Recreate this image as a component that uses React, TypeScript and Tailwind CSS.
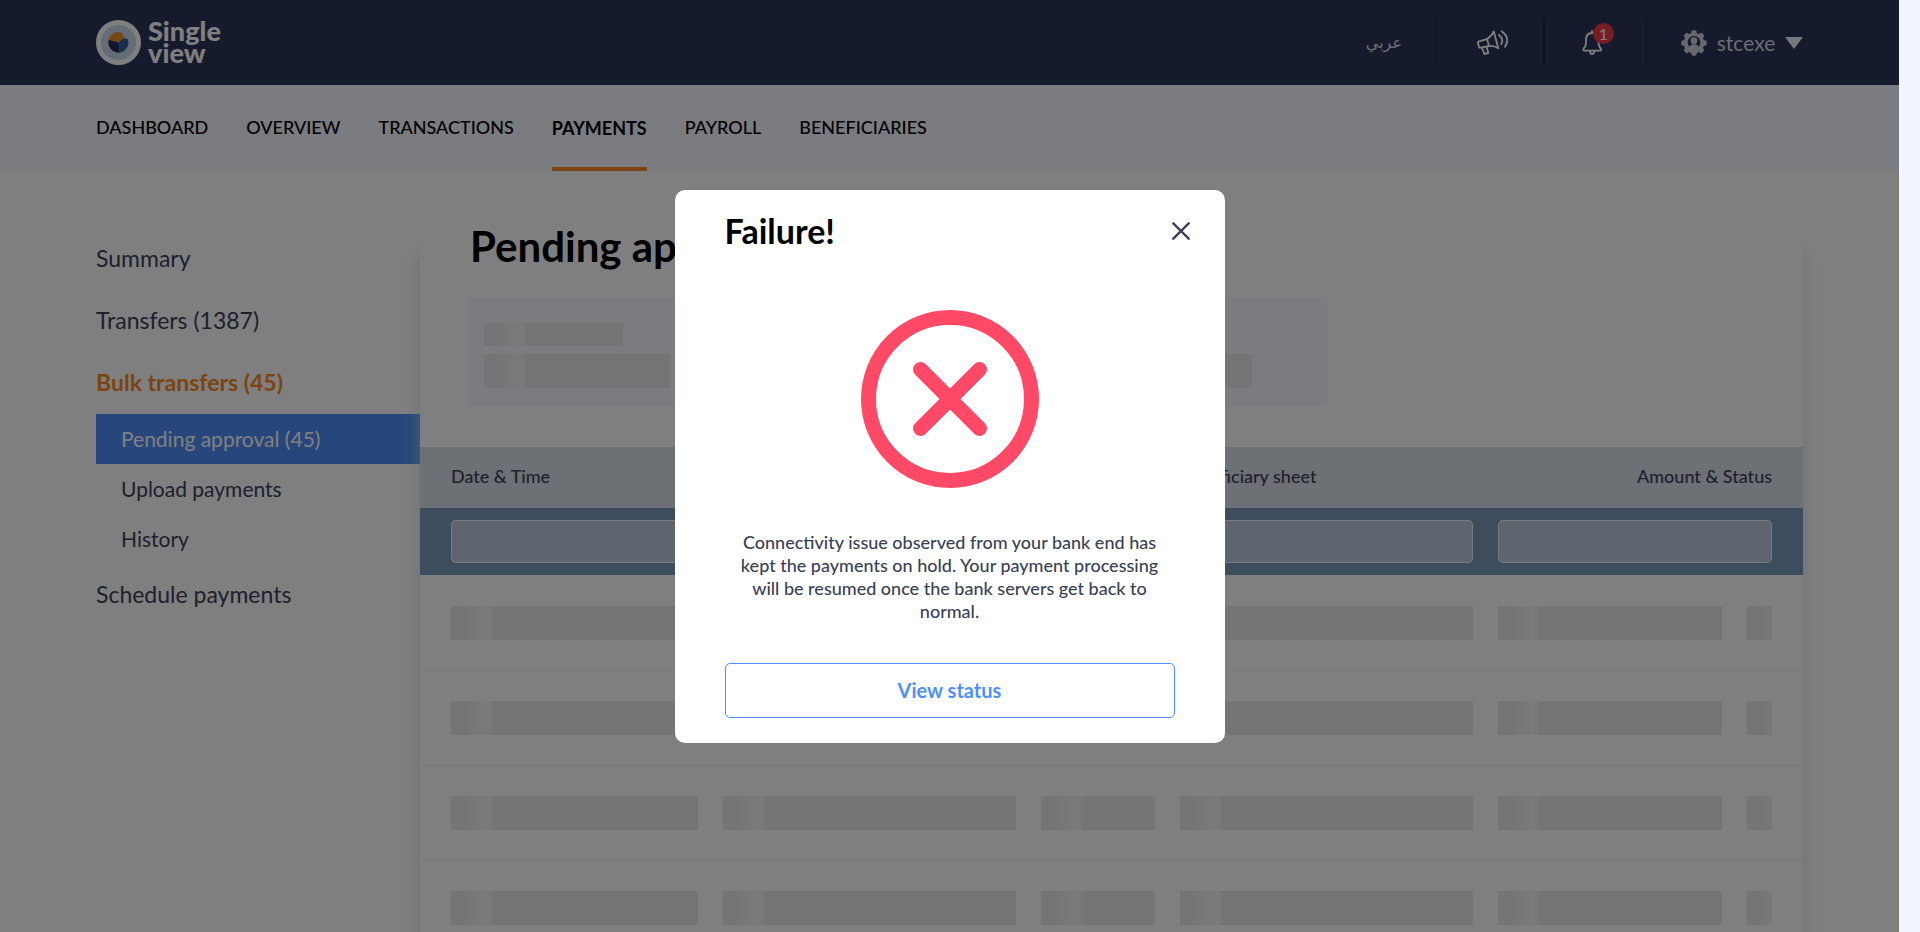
const NAV = ["DASHBOARD", "OVERVIEW", "TRANSACTIONS", "PAYMENTS", "PAYROLL", "BENEFICIARIES"];

const SHIMMER =
  "bg-[linear-gradient(90deg,#e8ebe8_14px,#f6f5f5_34px,#f2f1f1_41px,#e8ebe8_41px)]";

function Logo() {
  return (
    <a href="#home" className="flex items-center gap-[7px] pb-px" aria-label="Single view">
      <svg width="45" height="45" viewBox="0 0 44 44" aria-hidden="true">
        <circle cx="22" cy="22" r="19.6" fill="#c9d8ec" stroke="#ffffff" strokeWidth="4.8" />
        <path d="M22 22 L12.4 19.2 A10 10 0 0 1 25 12.2 L27.2 17 Z" fill="#f08c22" />
        <path d="M22 22 L12.4 19.2 A10 10 0 0 0 23.4 31.8 Z" fill="#252f58" />
        <path d="M22 22 L27.2 17.6 L31.2 19 A10 10 0 0 1 23.4 31.8 Z" fill="#3358a4" />
      </svg>
      <span className="text-[27px] leading-[22px] font-black text-white">
        Single
        <br />
        view
      </span>
    </a>
  );
}

function MegaphoneIcon() {
  return (
    <svg width="31" height="25" viewBox="0 0 93 75" fill="none" stroke="#ffffff" strokeWidth="5.5" strokeLinejoin="round" strokeLinecap="round" aria-hidden="true">
      <path d="M31 27 L6 34 Q2 35 3 39 L6 51 Q7 54 11 53 L37 48" />
      <path d="M30 27 Q44 19 50 4 L64 55 Q50 46 36 48 Z" />
      <path d="M15 53 L22 72 L34 69 L29 51" />
      <path d="M66 15 Q81 27 73 42" />
      <path d="M74 4 Q101 24 84 50" />
    </svg>
  );
}

function BellIcon() {
  return (
    <svg width="21" height="25" viewBox="0 0 63 75" fill="none" stroke="#ffffff" strokeWidth="5.5" strokeLinejoin="round" strokeLinecap="round" aria-hidden="true">
      <path d="M30 3 V9" />
      <path d="M30 9 C17 9 12 19 12 31 C12 48 10 50 5 55 Q2 62 8 62 H54 Q59 62 57 57 C50 50 49 45 49 31 C49 19 43 9 30 9 Z" />
      <path d="M24 65 Q25 72 30 72 Q36 72 37 65" />
    </svg>
  );
}

function GearUserIcon() {
  return (
    <svg width="26" height="26" viewBox="0 0 78 78" aria-hidden="true">
      <g fill="#ccd0d8">
        {[0, 45, 90, 135].map((a) => (
          <rect key={a} x="31" y="1" width="16" height="76" rx="5" transform={`rotate(${a} 39 39)`} />
        ))}
        <circle cx="39" cy="39" r="31" />
      </g>
      <circle cx="39" cy="37" r="19" fill="#2c345a" />
      <circle cx="39" cy="32" r="10" fill="#ccd0d8" />
      <path d="M24 58 C24 47 31 43 39 43 C47 43 54 47 54 58 Z" fill="#ccd0d8" />
    </svg>
  );
}

function Header() {
  return (
    <header className="flex h-[85px] shrink-0 items-center justify-between bg-[#2c345a] px-24">
      <Logo />
      <div className="flex h-[46px] items-stretch">
        <a href="#ar" lang="ar" dir="rtl" className="flex items-center pr-[34px] font-['DejaVu_Sans',sans-serif] text-[16px] leading-6 text-[#dce0e6]">
          عربي
        </a>
        <button type="button" aria-label="Announcements" className="flex w-[107px] items-center justify-center border-l border-[#1e2340] pl-1">
          <MegaphoneIcon />
        </button>
        <button type="button" aria-label="Notifications, 1 unread" className="flex w-[103px] items-center border-l-2 border-[#1e2340] pl-[37px]">
          <span className="relative">
            <BellIcon />
            <span className="absolute -top-[7px] left-[11px] flex size-[21px] items-center justify-center rounded-full bg-[#f23a48] text-[16px] leading-none text-white">
              1
            </span>
          </span>
        </button>
        <button type="button" className="flex w-[157px] items-center border-l border-[#1e2340] pl-[34px] text-[21px] text-[#d5d9e0]">
          <GearUserIcon />
          <span className="flex-1 text-center">stcexe</span>
          <svg width="18" height="12" viewBox="0 0 18 12" aria-hidden="true">
            <path d="M0 0 H18 L9 12 Z" fill="#f0f0f0" />
          </svg>
        </button>
      </div>
    </header>
  );
}

function MainNav() {
  return (
    <nav className="flex h-[86px] shrink-0 gap-[38px] bg-[#f6f8ff] px-24 text-[18px] font-medium text-black">
      {NAV.map((item) => (
        <a
          key={item}
          href={`#${item.toLowerCase()}`}
          className={
            item === "PAYMENTS"
              ? "flex items-center border-b-4 border-[#f58b20] pt-1 font-bold"
              : "flex items-center pb-0.5"
          }
        >
          {item}
        </a>
      ))}
    </nav>
  );
}

function Sidebar() {
  const main = "flex h-[62px] items-center pb-px text-[23px]";
  const sub = "flex h-[50px] items-center pl-[25px] text-[21px]";
  return (
    <aside className="w-[324px] shrink-0 pt-[57px] text-[#3a4256]">
      <a href="#summary" className={main}>Summary</a>
      <a href="#transfers" className={main}>Transfers (1387)</a>
      <a href="#bulk" className={`${main} font-bold text-[#f58b20]`}>Bulk transfers (45)</a>
      <a href="#pending" className={`${sub} bg-[#4f8ff9] text-white`}>Pending approval (45)</a>
      <a href="#upload" className={sub}>Upload payments</a>
      <a href="#history" className={sub}>History</a>
      <a href="#schedule" className={main}>Schedule payments</a>
    </aside>
  );
}

function PaymentsTable() {
  const input = "block h-[43px] w-full rounded-[5px] border border-white/80 bg-[#becbdf]";
  return (
    <table className="mt-10 w-full table-fixed border-collapse text-left text-[18px] text-[#3a4256]">
      <colgroup>
        <col className="w-[303px]" />
        <col className="w-[318px]" />
        <col className="w-[139px]" />
        <col className="w-[318px]" />
        <col className="w-[249px]" />
        <col className="w-[56px]" />
      </colgroup>
      <thead>
        <tr className="h-[61px] bg-[#dae0e8]">
          <th className="p-0 pb-0.5 pl-[31px] font-medium">Date &amp; Time</th>
          <th className="p-0 pb-0.5 font-medium">Reference</th>
          <th className="p-0 pb-0.5 font-medium">Count</th>
          <th className="p-0 pb-0.5 font-medium">Beneficiary sheet</th>
          <th colSpan={2} className="p-0 pr-[31px] pb-0.5 text-right font-medium">Amount &amp; Status</th>
        </tr>
        <tr className="h-[67px] bg-[#7a9abc]">
          <td className="p-0 pr-[25px] pl-[31px]"><input aria-label="Filter by date" className={input} /></td>
          <td className="p-0 pr-[25px]"><input aria-label="Filter by reference" className={input} /></td>
          <td className="p-0 pr-[25px]"><input aria-label="Filter by count" className={input} /></td>
          <td className="p-0 pr-[25px]"><input aria-label="Filter by beneficiary sheet" className={input} /></td>
          <td colSpan={2} className="p-0 pr-[31px]"><input aria-label="Filter by amount" className={input} /></td>
        </tr>
      </thead>
      <tbody>
        {[0, 1, 2, 3, 4].map((row) => (
          <tr key={row} className="h-[95px] border-b border-[#f3f3f8]">
            {[0, 1, 2, 3, 4, 5].map((col) => (
              <td
                key={col}
                className={
                  col === 0
                    ? "p-0 pt-px pr-[25px] pl-[31px]"
                    : col === 5
                      ? "p-0 pt-px pr-[31px]"
                      : "p-0 pt-px pr-[25px]"
                }
              >
                <div className={`h-[34px] ${SHIMMER}`} />
              </td>
            ))}
          </tr>
        ))}
      </tbody>
    </table>
  );
}

function Content() {
  return (
    <main className="mt-10 min-w-0 flex-1 bg-white shadow-[0_42px_16px_rgba(204,208,222,0.7)]">
      <h1 className="px-[50px] pt-[10px] pb-px text-[42px] leading-[50px] font-bold text-black">Pending approval</h1>
      <div className="mx-[50px] mt-[25px] flex h-[110px] w-[858px] gap-[73px] rounded-[5px] bg-[#f6f8ff] px-[14px] pt-[26px]">
        {[0, 1, 2].map((i) => (
          <div key={i} className="flex w-[186px] flex-col gap-2 last:w-[250px]">
            <div className={`h-[23px] w-[139px] ${SHIMMER}`} />
            <div className={`h-[34px] ${SHIMMER}`} />
          </div>
        ))}
      </div>
      <PaymentsTable />
    </main>
  );
}

function FailureDialog() {
  return (
    <div className="absolute inset-0 flex items-center justify-center bg-black/50">
      <div role="dialog" aria-modal="true" aria-labelledby="failure-title" className="flex w-[550px] flex-col rounded-[10px] bg-white px-[50px] pt-5 pb-[25px]">
        <div className="flex items-center justify-between">
          <h2 id="failure-title" className="text-[34px] leading-[42px] font-bold text-black">Failure!</h2>
          <button type="button" aria-label="Close" className="-mr-[15px]">
            <svg width="18" height="18" viewBox="0 0 18 18" stroke="#3a4256" strokeWidth="2.4" strokeLinecap="round" aria-hidden="true">
              <path d="M1.3 1.3 L16.7 16.7 M16.7 1.3 L1.3 16.7" />
            </svg>
          </button>
        </div>
        <svg width="178" height="178" viewBox="0 0 178 178" fill="none" stroke="#ff4966" strokeWidth="15" strokeLinecap="round" className="mt-[58px] self-center" aria-hidden="true">
          <circle cx="89" cy="89" r="81.5" />
          <path d="M59.5 59.5 L118.5 118.5 M118.5 59.5 L59.5 118.5" />
        </svg>
        <p className="mt-[43px] px-3 text-center text-[18px] leading-[23px] font-medium text-[#3a4256]">
          Connectivity issue observed from your bank end has kept the payments on hold. Your payment
          processing will be resumed once the bank servers get back to normal.
        </p>
        <button type="button" className="mt-10 h-[55px] rounded-[5px] border border-[#4f8ff9] text-[20px] font-bold text-[#4f8ff9]">
          View status
        </button>
      </div>
    </div>
  );
}

export default function App() {
  return (
    <div className="flex h-screen bg-[#f2f5ff] pr-[21px] font-['Lato',sans-serif]">
      <div className="relative min-w-0 flex-1 overflow-hidden bg-white">
        <Header />
        <MainNav />
        <div className="flex items-start px-24">
          <Sidebar />
          <Content />
        </div>
        <FailureDialog />
      </div>
    </div>
  );
}
